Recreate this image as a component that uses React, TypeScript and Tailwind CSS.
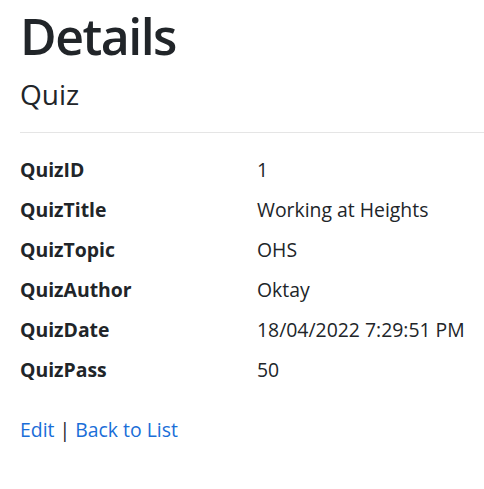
const rows = [
  { label: 'QuizID', value: '1' },
  { label: 'QuizTitle', value: 'Working at Heights' },
  { label: 'QuizTopic', value: 'OHS' },
  { label: 'QuizAuthor', value: 'Oktay' },
  { label: 'QuizDate', value: '18/04/2022 7:29:51 PM' },
  { label: 'QuizPass', value: '50' },
];

export default function App() {
  return (
    <div className="min-h-screen bg-white pl-[20px] text-[#212529] font-['Open_Sans',sans-serif]">
      <h1 className="pt-[11px] text-[50px] font-semibold leading-[50px] tracking-[-1.5px]">Details</h1>
      <div>
        <h4 className="mt-[19px] text-[28px] font-medium leading-[28px]">Quiz</h4>
        <hr className="mt-[24px] border-0 border-t border-[#e5e5e5]" />
        <dl className="mt-[17px] grid grid-cols-[237px_1fr] text-[19.4px] leading-[40px]">
          {rows.map((row) => (
            <div key={row.label} className="contents">
              <dt className="font-bold">{row.label}</dt>
              <dd>{row.value}</dd>
            </div>
          ))}
        </dl>
      </div>
      <div className="mt-[20px] text-[19.4px] leading-[40px]">
        <a href="#" className="text-[#1a6ed8]">Edit</a> |{' '}
        <a href="#" className="text-[#1a6ed8]">Back to List</a>
      </div>
    </div>
  );
}
